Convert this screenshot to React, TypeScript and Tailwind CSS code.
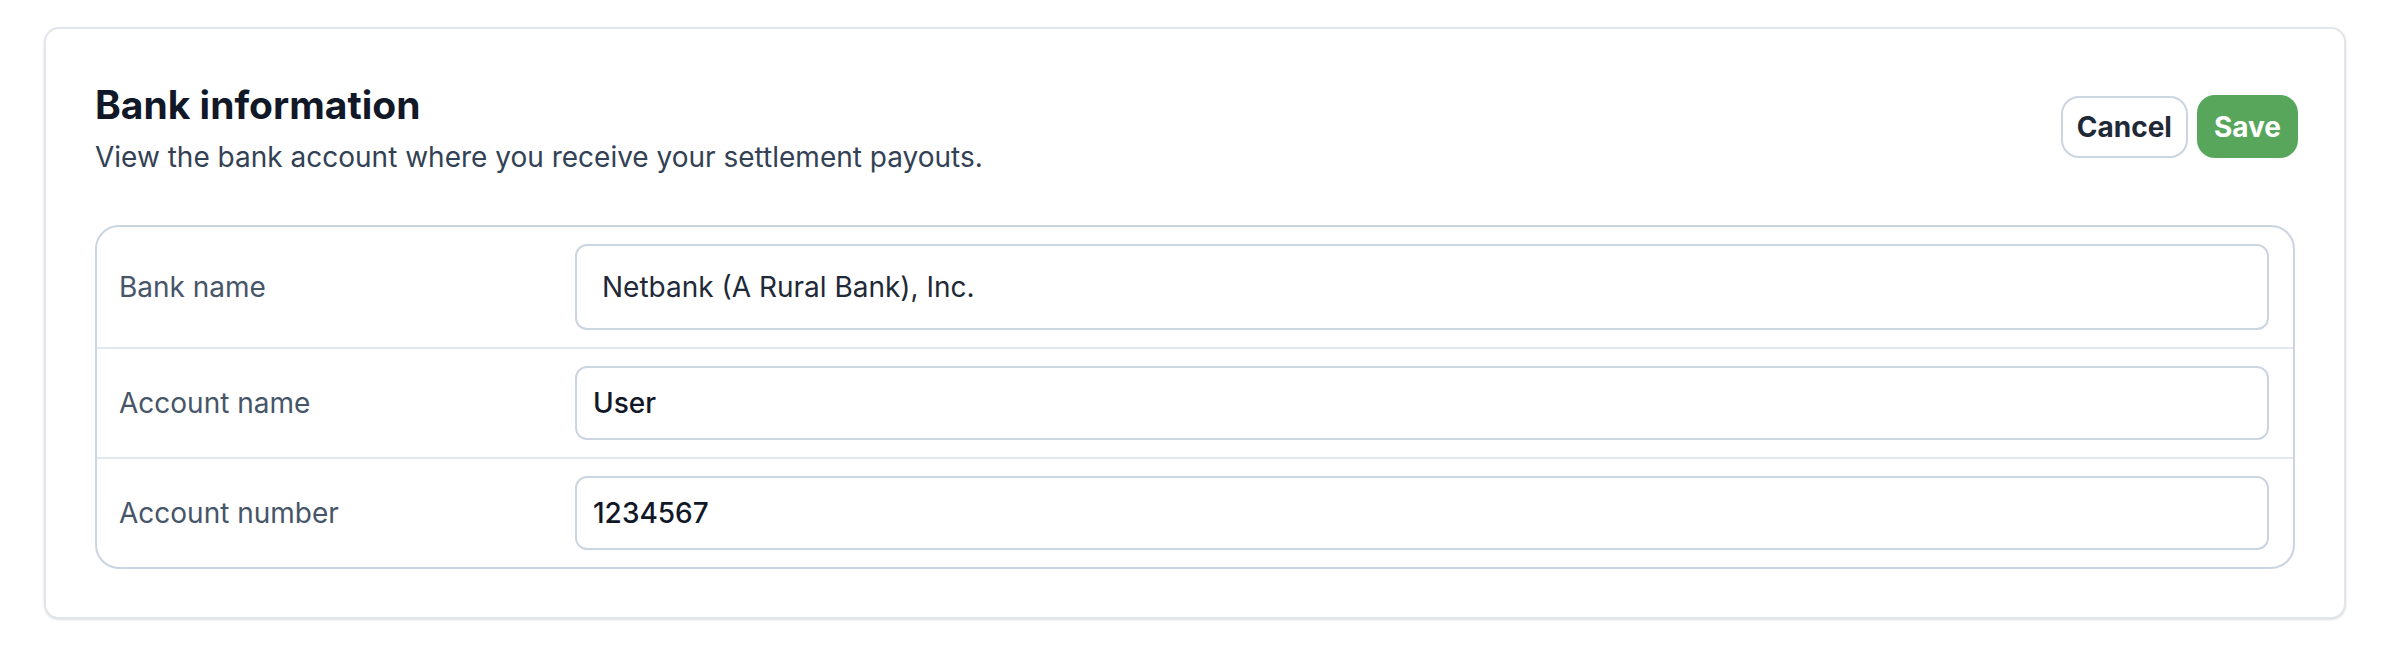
import { useState } from "react";

const rows = [
  { label: "Bank name", value: "Netbank (A Rural Bank), Inc.", select: true },
  { label: "Account name", value: "User", select: false },
  { label: "Account number", value: "1234567", select: false },
];

export default function App() {
  const [values, setValues] = useState(rows.map((r) => r.value));

  return (
    <div className="min-h-screen w-full bg-white px-[44px] pt-[27px] font-['Inter',sans-serif] antialiased">
      <div className="rounded-[15px] border-2 border-[#e2e6eb] bg-white px-[49px] pt-[53px] pb-[48px] shadow-sm">
        {/* Header */}
        <div className="flex items-center justify-between">
          <div>
            <h2 className="text-[39px] font-bold leading-[45px] text-[#111827]">Bank information</h2>
            <p className="mt-[12px] text-[28px] leading-[36px] text-[#334155]">
              View the bank account where you receive your settlement payouts.
            </p>
          </div>
          <div className="-mt-[4px] -mr-[3px] flex items-center gap-[9px]">
            <button className="h-[62px] rounded-[18px] border-2 border-[#cbd5e1] bg-white px-[14px] text-[28px] font-bold text-[#1f2937]">
              Cancel
            </button>
            <button className="h-[63px] rounded-[18px] bg-[#57a65c] px-[17px] text-[28px] font-bold text-white">
              Save
            </button>
          </div>
        </div>

        {/* Fields */}
        <div className="mt-[50px] divide-y-2 divide-[#e2e8f0] rounded-[24px] border-2 border-[#cbd5e1]">
          {rows.map((row, i) => (
            <div key={row.label} className="flex items-center py-[17px] pr-[24px]">
              <label className="w-[478px] shrink-0 pl-[22px] text-[28px] text-[#475569]">{row.label}</label>
              <input
                value={values[i]}
                onChange={(e) => setValues((v) => v.map((x, j) => (j === i ? e.target.value : x)))}
                className={
                  row.select
                    ? "h-[86px] flex-1 rounded-[12px] border-2 border-[#cbd5e1] bg-white px-[25px] text-[28px] text-[#1f2937] outline-none"
                    : "h-[74px] flex-1 rounded-[12px] border-2 border-[#cbd5e1] bg-white px-[16px] text-[28px] font-medium text-[#111827] outline-none"
                }
              />
            </div>
          ))}
        </div>
      </div>
    </div>
  );
}
